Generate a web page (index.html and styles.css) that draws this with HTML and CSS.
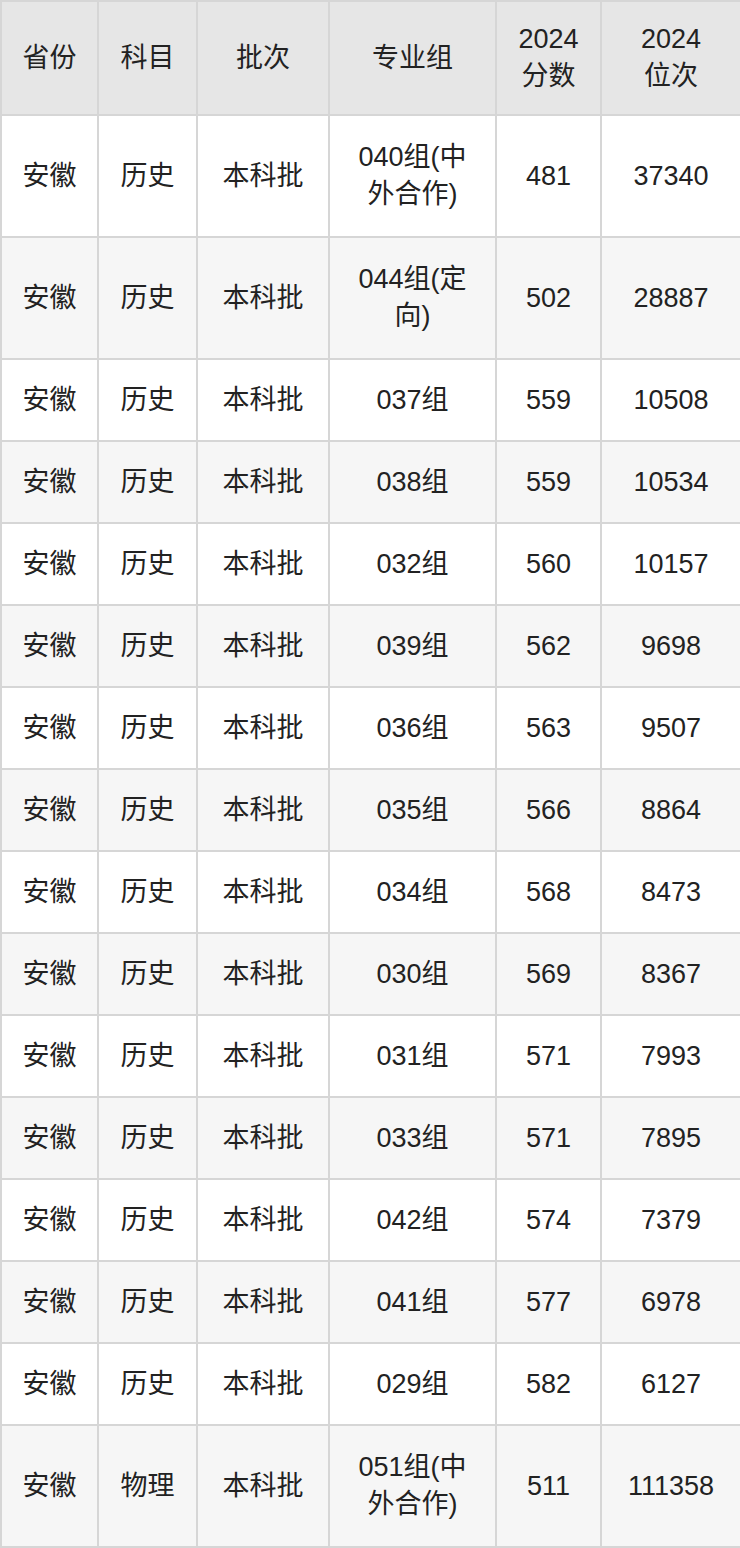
FILE: index.html
```html
<!DOCTYPE html>
<html lang="zh-CN">
<head>
<meta charset="utf-8">
<link rel="stylesheet" href="styles.css">
</head>
<body>
<table class="score-table">
  <colgroup>
    <col class="c1"><col class="c2"><col class="c3"><col class="c4"><col class="c5"><col class="c6">
  </colgroup>
  <thead>
    <tr class="head-row"><th>省份</th><th>科目</th><th>批次</th><th>专业组</th><th>2024<br>分数</th><th>2024<br>位次</th></tr>
  </thead>
  <tbody>
    <tr class="tall"><td>安徽</td><td>历史</td><td>本科批</td><td>040组(中外合作)</td><td>481</td><td>37340</td></tr>
    <tr class="tall"><td>安徽</td><td>历史</td><td>本科批</td><td>044组(定向)</td><td>502</td><td>28887</td></tr>
    <tr><td>安徽</td><td>历史</td><td>本科批</td><td>037组</td><td>559</td><td>10508</td></tr>
    <tr><td>安徽</td><td>历史</td><td>本科批</td><td>038组</td><td>559</td><td>10534</td></tr>
    <tr><td>安徽</td><td>历史</td><td>本科批</td><td>032组</td><td>560</td><td>10157</td></tr>
    <tr><td>安徽</td><td>历史</td><td>本科批</td><td>039组</td><td>562</td><td>9698</td></tr>
    <tr><td>安徽</td><td>历史</td><td>本科批</td><td>036组</td><td>563</td><td>9507</td></tr>
    <tr><td>安徽</td><td>历史</td><td>本科批</td><td>035组</td><td>566</td><td>8864</td></tr>
    <tr><td>安徽</td><td>历史</td><td>本科批</td><td>034组</td><td>568</td><td>8473</td></tr>
    <tr><td>安徽</td><td>历史</td><td>本科批</td><td>030组</td><td>569</td><td>8367</td></tr>
    <tr><td>安徽</td><td>历史</td><td>本科批</td><td>031组</td><td>571</td><td>7993</td></tr>
    <tr><td>安徽</td><td>历史</td><td>本科批</td><td>033组</td><td>571</td><td>7895</td></tr>
    <tr><td>安徽</td><td>历史</td><td>本科批</td><td>042组</td><td>574</td><td>7379</td></tr>
    <tr><td>安徽</td><td>历史</td><td>本科批</td><td>041组</td><td>577</td><td>6978</td></tr>
    <tr><td>安徽</td><td>历史</td><td>本科批</td><td>029组</td><td>582</td><td>6127</td></tr>
    <tr class="tall"><td>安徽</td><td>物理</td><td>本科批</td><td>051组(中外合作)</td><td>511</td><td>111358</td></tr>
  </tbody>
</table>
</body>
</html>
```

FILE: styles.css
```css
html, body {
  margin: 0;
  padding: 0;
  background: #ffffff;
}

.score-table {
  width: 740px;
  border-collapse: collapse;
  table-layout: fixed;
  font-family: "Liberation Sans", "Noto Sans CJK SC", sans-serif;
  font-size: 27px;
  line-height: 37px;
  color: #222222;
}

.c1 { width: 97px; }
.c2 { width: 99px; }
.c3 { width: 132px; }
.c4 { width: 167px; }
.c5 { width: 105px; }
.c6 { width: 140px; }

.score-table th,
.score-table td {
  border: 2px solid #d6d6d6;
  padding: 0 16px;
  text-align: center;
  vertical-align: middle;
  font-weight: normal;
}

.head-row {
  height: 114px;
  background: #e6e6e6;
}

.score-table tbody tr {
  height: 82px;
}

.score-table tbody tr.tall {
  height: 122px;
}

.score-table tbody tr:nth-child(even) {
  background: #f6f6f6;
}
```
